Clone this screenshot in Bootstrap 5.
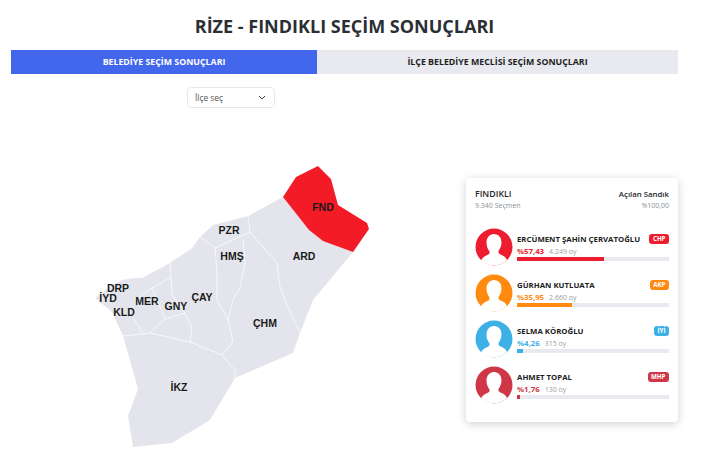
<!doctype html>
<html lang="tr"><head><meta charset="utf-8">
<link href="https://cdn.jsdelivr.net/npm/bootstrap@5.3.0/dist/css/bootstrap.min.css" rel="stylesheet">
<style>
html,body{height:467px;overflow:hidden;background:#fff}
body{font-family:"Open Sans",sans-serif;color:#212529}
.pagewrap{width:690px;padding:0 11px 0 11px;margin:0}
.ttl{font-size:18px;font-weight:700;line-height:27px;padding-top:13px;margin:0;color:#2b2f33;width:667px;text-align:center}
.tabs{height:24px;margin-top:10px}
.tabx{height:24px;font-size:8.8px;font-weight:700;line-height:24px;text-align:center;background:#e9eaef;color:#1d1f22}
.taba{width:306px;background:#4267ec;color:#fff}
.tabb{width:361px}
.sel{width:88px;height:21px;margin:13px 0 0 176px;font-size:8.4px;line-height:19px;padding:0 0 0 7px;border:1px solid #e8e9ed;border-radius:4px;color:#555;}
.main{margin-top:0}
.mapsvg{width:466px;height:359px;flex:none;margin-left:-11px}
.pv{fill:#e4e5ec;stroke:none}
.pf{fill:#f21b26;stroke:none}
.lb{font-family:"Liberation Sans",sans-serif;font-weight:700;font-size:10.5px;fill:#1a1a1a;text-anchor:middle}
.pan{width:212px;height:244px;flex:none;margin-top:70px;background:#fff;border-radius:4px;box-shadow:0 2px 10px rgba(0,0,0,.18);padding:10px 9px 0 9px}
.hd0{font-size:8.8px;font-weight:600;line-height:12px;color:#25282b}
.hd1{font-size:7.8px;font-weight:600;line-height:12px;color:#25282b}
.hd2{font-size:7px;line-height:11px;color:#8a8f96}
.cand{height:46px;gap:4px;align-items:flex-start}
.cands{margin-top:17px}
.av{width:38px;height:38px;flex:none}
.info{flex:1;min-width:0;padding-top:6px}
.nm{font-size:7.8px;font-weight:700;line-height:11px;color:#1c1e21;white-space:nowrap}
.pct{font-size:7.800px;font-weight:700;line-height:10px;margin-right:5px}
.vot{font-size:7px;color:#9a9ea5;line-height:10px}
.pline{line-height:10px;height:10px;margin-top:-2px}
.barx{height:4px;background:#e9eaef;margin-top:4px;display:flex}
.barx i{display:block;height:4px}
.pty{font-size:6.2px;font-weight:700;line-height:10px;color:#fff;padding:0 3.500px;border-radius:3px;height:10px;margin-top:0}
.c1{color:#ed1c2e}.b1{background:#ed1c2e}
.c2{color:#ff8a0f}.b2{background:#ff8a0f}
.c3{color:#3db1e6}.b3{background:#3db1e6}
.c4{color:#cf3748}.b4{background:#cf3748}
</style></head><body>
<svg width="0" height="0" class="position-absolute"><defs><path id="silh" d="M19 6c4.500 0 7.500 3.500 7.500 8.500 0 3.500-1.500 6.500-3 8.500v2c1.500 1.500 3.500 2 5 3 1.500 1 3 2.500 3.500 4A18.500 18.500 0 0 1 6 32.500c.5-1.500 2-3 3.500-4 1.500-1 3.500-1.500 5-3v-2c-1.500-2-3-5-3-8.500C11.500 9.500 14.500 6 19 6z"/></defs></svg>
<div class="pagewrap">
<h1 class="ttl">RİZE - FINDIKLI SEÇİM SONUÇLARI</h1>
<div class="tabs d-flex">
<div class="tabx taba">BELEDİYE SEÇİM SONUÇLARI</div>
<div class="tabx tabb">İLÇE BELEDİYE MECLİSİ SEÇİM SONUÇLARI</div>
</div>
<div class="sel d-flex justify-content-between align-items-center">
<span>İlçe seç</span>
<svg class="me-2" width="8" height="5" viewBox="0 0 8 5"><path d="M1 1l3 3 3-3" fill="none" stroke="#444" stroke-width="1"/></svg>
</div>
<div class="main d-flex">
<svg class="mapsvg" viewBox="0 108 466 359">
<path class="pv" d="M283 197L248 216L225 222L213 225L200 237L192 248L170 263L142 278L135 278L122 280L110 287L95 298L112 312L123 336L138 389L128 416L133 447L172 443L210 420L235 378L293 353L300 333L313 300L353 252L323 241L309 230Z"/>
<g fill="none" stroke="#fff" stroke-width=".7" stroke-linejoin="round">
<path d="M200 237L215 248L250 232L248 216"/>
<path d="M250 232L277 263L280 287L287 305L300 333"/>
<path d="M215 248L217 272L217 300L228 320L233 342L222 355"/>
<path d="M243 239L245 262L240 288L233 300L228 320"/>
<path d="M123 336L150 333L190 342L222 355L235 370L235 378"/>
<path d="M170 263L172 295"/>
<path d="M152 288L170 278M172 295L185 313L192 328L190 342M185 313L165 319L152 288"/>
<path d="M135 300L152 288M133 318L144 335M165 319L150 333"/>
</g>
<path class="pf" d="M283 197L296 177L318 166L331 179L338 205L367 223L369 229L353 252L323 241L309 230Z"/>
<text class="lb" x="323" y="211">FND</text>
<text class="lb" x="304" y="260">ARD</text>
<text class="lb" x="229" y="234">PZR</text>
<text class="lb" x="232" y="260">HMŞ</text>
<text class="lb" x="202" y="301">ÇAY</text>
<text class="lb" x="176" y="310">GNY</text>
<text class="lb" x="147" y="305">MER</text>
<text class="lb" x="118" y="292">DRP</text>
<text class="lb" x="108" y="302">İYD</text>
<text class="lb" x="124" y="316">KLD</text>
<text class="lb" x="265" y="327">ÇHM</text>
<text class="lb" x="179" y="391">İKZ</text>
</svg>
<div class="pan">
<div class="d-flex justify-content-between">
<div><div class="hd0">FINDIKLI</div><div class="hd2">9.340 Seçmen</div></div>
<div class="text-end"><div class="hd1">Açılan Sandık</div><div class="hd2">%100,00</div></div>
</div>
<div class="cands">
<div class="cand d-flex">
<svg class="av" viewBox="0 0 38 38"><circle cx="19" cy="19" r="18.500" fill="#ed1c2e"/><use href="#silh" fill="#fff"/></svg>
<div class="info"><div class="d-flex justify-content-between"><span class="nm">ERCÜMENT ŞAHİN ÇERVATOĞLU</span><span class="pty b1">CHP</span></div>
<div class="pline"><span class="pct c1">%57,43</span><span class="vot">4.249 oy</span></div>
<div class="barx"><i class="b1" style="width:57%"></i></div></div>
</div>
<div class="cand d-flex">
<svg class="av" viewBox="0 0 38 38"><circle cx="19" cy="19" r="18.500" fill="#ff8a0f"/><use href="#silh" fill="#fff"/></svg>
<div class="info"><div class="d-flex justify-content-between"><span class="nm">GÜRHAN KUTLUATA</span><span class="pty b2">AKP</span></div>
<div class="pline"><span class="pct c2">%35,95</span><span class="vot">2.660 oy</span></div>
<div class="barx"><i class="b2" style="width:36%"></i></div></div>
</div>
<div class="cand d-flex">
<svg class="av" viewBox="0 0 38 38"><circle cx="19" cy="19" r="18.500" fill="#3db1e6"/><use href="#silh" fill="#fff"/></svg>
<div class="info"><div class="d-flex justify-content-between"><span class="nm">SELMA KÖROĞLU</span><span class="pty b3">İYİ</span></div>
<div class="pline"><span class="pct c3">%4,26</span><span class="vot">315 oy</span></div>
<div class="barx"><i class="b3" style="width:4.260%"></i></div></div>
</div>
<div class="cand d-flex">
<svg class="av" viewBox="0 0 38 38"><circle cx="19" cy="19" r="18.500" fill="#cf3748"/><use href="#silh" fill="#fff"/></svg>
<div class="info"><div class="d-flex justify-content-between"><span class="nm">AHMET TOPAL</span><span class="pty b4">MHP</span></div>
<div class="pline"><span class="pct c4">%1,76</span><span class="vot">130 oy</span></div>
<div class="barx"><i class="b4" style="width:1.760%"></i></div></div>
</div>
</div>
</div>
</div>
</div>
<script src="https://cdn.jsdelivr.net/npm/bootstrap@5.3.0/dist/js/bootstrap.bundle.min.js"></script>
</body></html>
